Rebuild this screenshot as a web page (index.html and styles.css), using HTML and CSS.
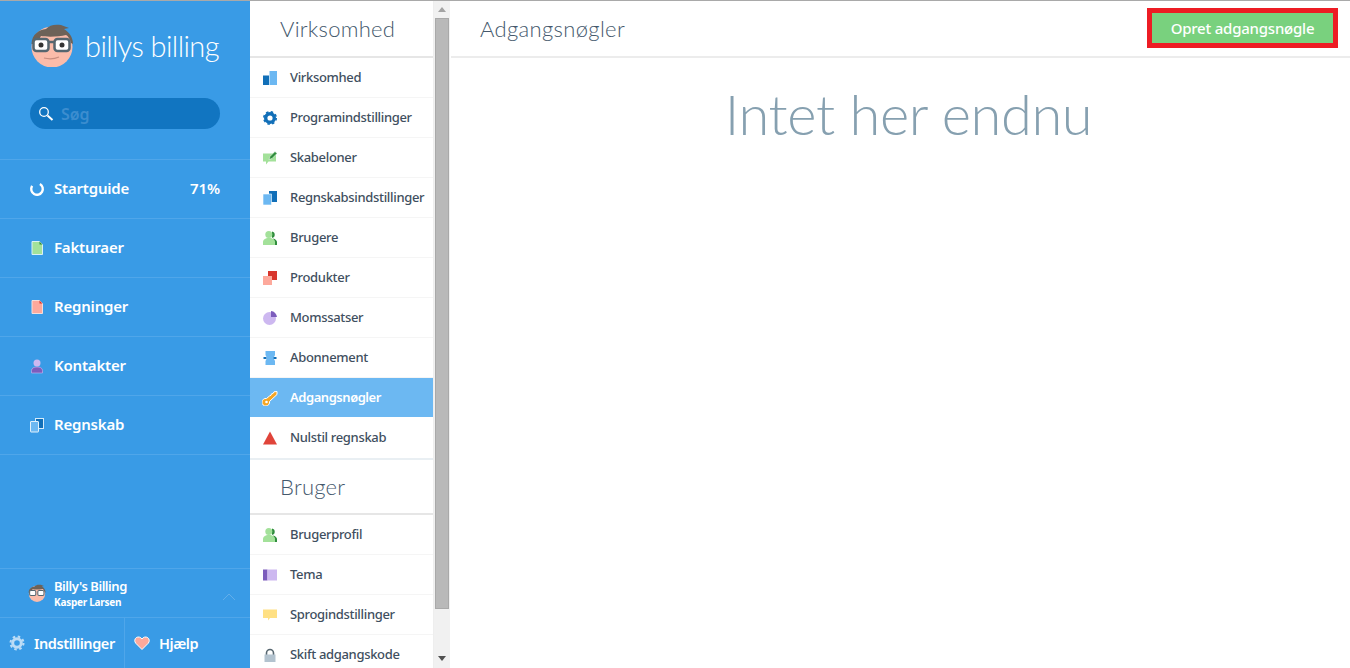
FILE: index.html
```html
<!DOCTYPE html>
<html lang="da">
<head>
<meta charset="utf-8">
<title>Adgangsnøgler</title>
<link rel="stylesheet" href="styles.css">
</head>
<body>
<div class="app">
  <aside class="sidebar">
    <div class="brand">
      <svg class="avatar" viewBox="0 0 44 44"><circle cx="22" cy="24" r="20.500" fill="#fbbcaa"/><path d="M1.500 21C2 11 9 7 16 6c3-4 9-5 15-4l8 3-5 1c5 3 9 8 9 15l-2-1c-1-4-3-7-5-8-7 2-20 2-25 1-2 3-3 6-3 8z" fill="#6d6258"/><rect x="3.500" y="16" width="15" height="12" rx="3" fill="#fff" stroke="#56666f" stroke-width="2.500"/><rect x="24.500" y="16" width="15" height="12" rx="3" fill="#fff" stroke="#56666f" stroke-width="2.500"/><path d="M18 19h7" stroke="#56666f" stroke-width="2.500"/><circle cx="11" cy="22" r="2.500" fill="#333"/><circle cx="32" cy="22" r="2.500" fill="#333"/><path d="M14 35q8 2 15-1" fill="none" stroke="#c98d7f" stroke-width="1.200"/></svg>
      <span class="brand-name">billys billing</span>
    </div>
    <div class="search">
      <svg class="search-icon" viewBox="0 0 16 16"><circle cx="6" cy="6" r="4.300" fill="none" stroke="#fff" stroke-width="1.300"/><path d="M9.500 9.500l5 4.500" stroke="#fff" stroke-width="2"/></svg>
      <span class="search-text">Søg</span>
    </div>
    <nav class="main-nav">
      <a class="main-item">
        <svg class="main-icon" viewBox="0 0 16 16"><circle cx="8" cy="8" r="5.800" fill="none" stroke="#fff" stroke-width="2.400" stroke-dasharray="27 10" transform="rotate(-60 8 8)"/></svg>
        <span class="main-label">Startguide</span><span class="main-value">71%</span>
      </a>
      <a class="main-item">
        <svg class="main-icon" viewBox="0 0 16 16"><path d="M3 1.500h7.500l3 3v10H3z" fill="#a3e19a" stroke="#d9f0f5"/><path d="M10.500 1.500l3 3h-3z" fill="#2f8d3d"/></svg>
        <span class="main-label">Fakturaer</span>
      </a>
      <a class="main-item">
        <svg class="main-icon" viewBox="0 0 16 16"><path d="M3 1.500h7.500l3 3v10H3z" fill="#fda99c" stroke="#f3dedc"/><path d="M10.500 1.500l3 3h-3z" fill="#d8352c"/></svg>
        <span class="main-label">Regninger</span>
      </a>
      <a class="main-item">
        <svg class="main-icon" viewBox="0 0 16 16"><circle cx="8" cy="5" r="3.500" fill="#cdb8f0"/><path d="M2.500 15v-2.500C2.500 10 5 9 8 9s5.500 1 5.500 3.500V15z" fill="#7c5cbc" stroke="#cdb8f0" stroke-width=".6"/></svg>
        <span class="main-label">Kontakter</span>
      </a>
      <a class="main-item">
        <svg class="main-icon" viewBox="0 0 16 16"><rect x="6.500" y="1.500" width="8" height="10" fill="#116fb8" stroke="#d5ebfa"/><rect x="1.500" y="4.500" width="8" height="10.500" rx=".5" fill="#6cb8f2" stroke="#e0f0fb"/></svg>
        <span class="main-label">Regnskab</span>
      </a>
    </nav>
    <div class="account">
      <svg class="account-avatar" viewBox="0 0 44 44"><circle cx="22" cy="24" r="20" fill="#fbbcaa"/><path d="M1.500 21C2 11 9 7 16 6c3-4 9-5 15-4l8 3-5 1c5 3 9 8 9 15l-2-1c-1-4-3-7-5-8-7 2-20 2-25 1-2 3-3 6-3 8z" fill="#6d6258"/><rect x="4" y="16" width="15" height="12" rx="3" fill="#fff" stroke="#56666f" stroke-width="2.500"/><rect x="24" y="16" width="15" height="12" rx="3" fill="#fff" stroke="#56666f" stroke-width="2.500"/></svg>
      <div class="account-text">
        <div class="account-org">Billy's Billing</div>
        <div class="account-user">Kasper Larsen</div>
      </div>
      <svg class="chevron" viewBox="0 0 14 8"><path d="M1 7l6-6 6 6" fill="none" stroke="#62aeea" stroke-width="1"/></svg>
    </div>
    <div class="bottom-bar">
      <a class="bottom-item settings">
        <svg class="bottom-icon" viewBox="0 0 16 16"><circle cx="8" cy="8" r="4.300" fill="none" stroke="#bcdcf6" stroke-width="3"/><circle cx="8" cy="8" r="6.500" fill="none" stroke="#bcdcf6" stroke-width="2" stroke-dasharray="2.500 2.600"/></svg>
        <span>Indstillinger</span>
      </a>
      <a class="bottom-item help">
        <svg class="bottom-icon" viewBox="0 0 16 16"><path d="M8 14.500L1.800 8.300C.2 6.500.5 3.800 2.300 2.600 4.200 1.400 6.800 2 8 4c1.200-2 3.800-2.600 5.700-1.400 1.800 1.200 2.100 3.900.5 5.700z" fill="#fda99c" stroke="#fff"/></svg>
        <span>Hjælp</span>
      </a>
    </div>
  </aside>

  <section class="settings-col">
    <div class="settings-list">
      <h2 class="group-title">Virksomhed</h2>
      <ul class="group">
        <li class="row"><svg class="row-icon" viewBox="0 0 14 14"><rect x="0" y="4.500" width="6" height="9.500" fill="#116fb8"/><rect x="6.500" y="0" width="7.500" height="14" fill="#6cb8f2"/></svg>Virksomhed</li>
        <li class="row"><svg class="row-icon" viewBox="0 0 14 14"><circle cx="7" cy="7" r="4.300" fill="none" stroke="#116fb8" stroke-width="3.400"/><circle cx="7" cy="7" r="6.200" fill="none" stroke="#116fb8" stroke-width="1.600" stroke-dasharray="2.500 2.370"/></svg>Programindstillinger</li>
        <li class="row"><svg class="row-icon" viewBox="0 0 14 14"><path d="M0 2.500h13v8H5.500L3 13.500v-3H0z" fill="#a3e19a"/><path d="M6 8.500l1-3L12 .5 14 2.500 9 7.500z" fill="#2f8d3d" stroke="#fff" stroke-width=".5"/></svg>Skabeloner</li>
        <li class="row"><svg class="row-icon" viewBox="0 0 14 14"><rect x="6" y="0" width="8" height="11" fill="#116fb8"/><rect x="0" y="3" width="8.500" height="11" fill="#6cb8f2" stroke="#fff" stroke-width=".6"/></svg>Regnskabsindstillinger</li>
        <li class="row"><svg class="row-icon" viewBox="0 0 14 14"><path d="M9 .5a3.300 3.300 0 0 1 0 6.500zM10 7.500c2.500.5 4 2 4 3.500v3h-2z" fill="#2f8d3d"/><circle cx="5.800" cy="3.500" r="3.500" fill="#a3e19a"/><path d="M0 14v-3c0-2 2-4 6-4s6 2 6 4v3z" fill="#a3e19a"/></svg>Brugere</li>
        <li class="row"><svg class="row-icon" viewBox="0 0 14 14"><rect x="5" y="0" width="9" height="9" fill="#d8352c"/><rect x="0" y="5" width="9" height="9" fill="#fda99c"/></svg>Produkter</li>
        <li class="row"><svg class="row-icon" viewBox="0 0 14 14"><circle cx="6.500" cy="7.500" r="6.500" fill="#cdb8f0"/><path d="M8 0a6.500 6.500 0 0 1 6 6H8z" fill="#7c5cbc"/></svg>Momssatser</li>
        <li class="row"><svg class="row-icon" viewBox="0 0 14 14"><path d="M2.500 0h9.500v4l-1.500 3L12 10v4H2.500v-4L4 7 2.500 4z" fill="#6cb8f2"/><path d="M.5 6h3v2h-3zM10.500 6h3v2h-3z" fill="#116fb8"/></svg>Abonnement</li>
        <li class="row row-active"><svg class="row-icon key-icon" viewBox="0 0 16 16"><path d="M4.500 8.500a3.800 3.800 0 1 0 3 3L15 4.500 15 1.500l-3 .3-1 1.700-1.500.3-.5 1.500-1.500.7z" fill="#f6a623" stroke="#fff" stroke-width="1"/><circle cx="4.500" cy="12" r="1.300" fill="#fff"/></svg>Adgangsnøgler</li>
        <li class="row"><svg class="row-icon" viewBox="0 0 14 14"><path d="M7 .5L14 13.500H0z" fill="#e0443a"/></svg>Nulstil regnskab</li>
      </ul>
      <h2 class="group-title group-title-next">Bruger</h2>
      <ul class="group">
        <li class="row"><svg class="row-icon" viewBox="0 0 14 14"><path d="M9 .5a3.300 3.300 0 0 1 0 6.500zM10 7.500c2.500.5 4 2 4 3.500v3h-2z" fill="#2f8d3d"/><circle cx="5.800" cy="3.500" r="3.500" fill="#a3e19a"/><path d="M0 14v-3c0-2 2-4 6-4s6 2 6 4v3z" fill="#a3e19a"/></svg>Brugerprofil</li>
        <li class="row"><svg class="row-icon" viewBox="0 0 14 14"><rect x="0" y="1.500" width="4.500" height="11" fill="#7c5cbc"/><rect x="4.500" y="1.500" width="9.500" height="11" fill="#cdb8f0"/></svg>Tema</li>
        <li class="row"><svg class="row-icon" viewBox="0 0 14 14"><path d="M0 1.500h14v8.500H7l-2 2.500V10H0z" fill="#ffe083"/></svg>Sprogindstillinger</li>
        <li class="row"><svg class="row-icon" viewBox="0 0 14 14"><path d="M3.500 7V5a3.500 3.500 0 0 1 7 0v2" fill="none" stroke="#56666f" stroke-width="1.600"/><rect x="1.500" y="6.500" width="11" height="7.500" fill="#b3c3cf"/></svg>Skift adgangskode</li>
      </ul>
    </div>
    <div class="scrollbar">
      <div class="scroll-arrow-up"></div>
      <div class="scroll-thumb"></div>
      <div class="scroll-arrow-down"></div>
    </div>
  </section>

  <main class="content">
    <header class="content-head">
      <h1 class="content-title">Adgangsnøgler</h1>
      <button class="create-btn">Opret adgangsnøgle</button>
    </header>
    <p class="empty">Intet her endnu</p>
  </main>
</div>
</body>
</html>
```
FILE: styles.css
```css
* { box-sizing: border-box; }
html, body { margin: 0; height: 100%; overflow: hidden; }
body { font-family: "Noto Sans", "Open Sans", sans-serif; color: #3f4f60; background: #fff; }
ul { list-style: none; margin: 0; padding: 0; }
h1, h2, p { margin: 0; font-weight: 300; }

.app { display: flex; height: 668px; border-top: 1px solid #a9a9a9; }

.sidebar { width: 250px; flex: none; background: #399be6; color: #fff; display: flex; flex-direction: column; height: 667px; }
.brand { display: flex; align-items: flex-start; padding: 22px 0 0 30px; height: 97px; }
.avatar { width: 44px; height: 44px; }
.brand-name { font-family: Lato, sans-serif; font-weight: 300; font-size: 29px; line-height: 46px; margin-left: 11px; letter-spacing: -.6px; }
.search { margin: 0 30px; height: 31px; border-radius: 16px; background: #1175c1; display: flex; align-items: center; padding-left: 8px; }
.search-icon { width: 16px; height: 16px; }
.search-text { margin-left: 7px; font-size: 16px; font-weight: 600; color: #3c8dcf; }
.main-nav { margin-top: 30px; border-top: 1px solid #4fa6ea; }
.main-item { display: flex; align-items: center; height: 59px; padding: 0 30px 2px; border-bottom: 1px solid #4fa6ea; font-size: 15px; font-weight: 600; letter-spacing: -.2px; }
.main-icon { width: 16px; height: 16px; flex: none; margin: 2px 9px 0 -1px; }
.main-label { flex: 1; }
.main-value { letter-spacing: -.1px; }
.account { margin-top: auto; height: 49px; border-top: 1px solid #4fa6ea; display: flex; align-items: center; padding: 0 14px 0 28px; }
.account-avatar { width: 18px; height: 18px; flex: none; margin-right: 8px; }
.account-text { flex: 1; }
.account-org { font-size: 13px; font-weight: 600; line-height: 17px; letter-spacing: -.45px; }
.account-user { font-size: 10px; font-weight: 700; line-height: 14px; letter-spacing: -.25px; }
.chevron { width: 14px; height: 8px; margin-top: 7px; }
.bottom-bar { display: flex; height: 51px; border-top: 1px solid #4fa6ea; }
.bottom-item { display: flex; align-items: center; font-size: 14.5px; font-weight: 600; letter-spacing: -.42px; }
.settings { width: 125px; padding-left: 9px; border-right: 1px solid #4fa6ea; }
.help { padding-left: 9px; }
.bottom-icon { width: 16px; height: 16px; margin-right: 9px; flex: none; }

.settings-col { width: 201px; flex: none; display: flex; height: 667px; }
.settings-list { width: 184px; flex: none; overflow: hidden; border-right: 1px solid #eee; }
.group-title { height: 57px; line-height: 56px; padding-left: 30px; font-family: Lato, sans-serif; font-size: 22px; letter-spacing: .25px; color: #44586c; border-bottom: 2px solid #e6e6e6; }
.group-title-next { border-top: 2px solid #e9eff3; line-height: 53px; }
.row { display: flex; align-items: center; height: 40px; padding-left: 13px; padding-bottom: 2px; font-size: 13px; font-weight: 500; letter-spacing: -.33px; white-space: nowrap; color: #3f4f60; border-bottom: 1px solid #f5f5f5; }
.row:last-child { border-bottom: 0; }
.row-active { background: #6cb8f2; color: #fff; font-weight: 600; letter-spacing: -.45px; border-bottom: 1px solid #fff; }
.row-icon { width: 14px; height: 14px; flex: none; margin-right: 13px; margin-top: 2px; }
.key-icon { width: 16px; height: 16px; margin-left: -1px; margin-right: 12px; }

.scrollbar { width: 16px; flex: none; background: #f1f1f1; display: flex; flex-direction: column; align-items: center; }
.scroll-arrow-up { margin-top: 6px; border: 4px solid transparent; border-top: 0; border-bottom: 5px solid #a3a3a3; }
.scroll-thumb { width: 14px; height: 591px; margin-top: 6px; background: #b9b9b9; border: 1px solid #a9a9a9; }
.scroll-arrow-down { margin-top: 47px; border: 4px solid transparent; border-bottom: 0; border-top: 5px solid #505050; }

.content { flex: 1; min-width: 0; }
.content-head { height: 57px; display: flex; align-items: center; justify-content: space-between; padding: 0 12px 0 29px; border-bottom: 2px solid #ececec; }
.content-title { font-family: Lato, sans-serif; font-size: 22px; letter-spacing: .35px; color: #44586c; }
.create-btn { width: 191px; height: 40px; background: #79d17e; border: 5px solid #ed1c24; color: #fff; font: 500 15px "Noto Sans", sans-serif; letter-spacing: -.22px; padding: 0; margin-top: -1px; }
.empty { text-align: center; padding-left: 16px; font-family: Lato, sans-serif; font-size: 56px; letter-spacing: -.4px; color: #86a0b0; margin-top: 21px; line-height: 70px; }
```
